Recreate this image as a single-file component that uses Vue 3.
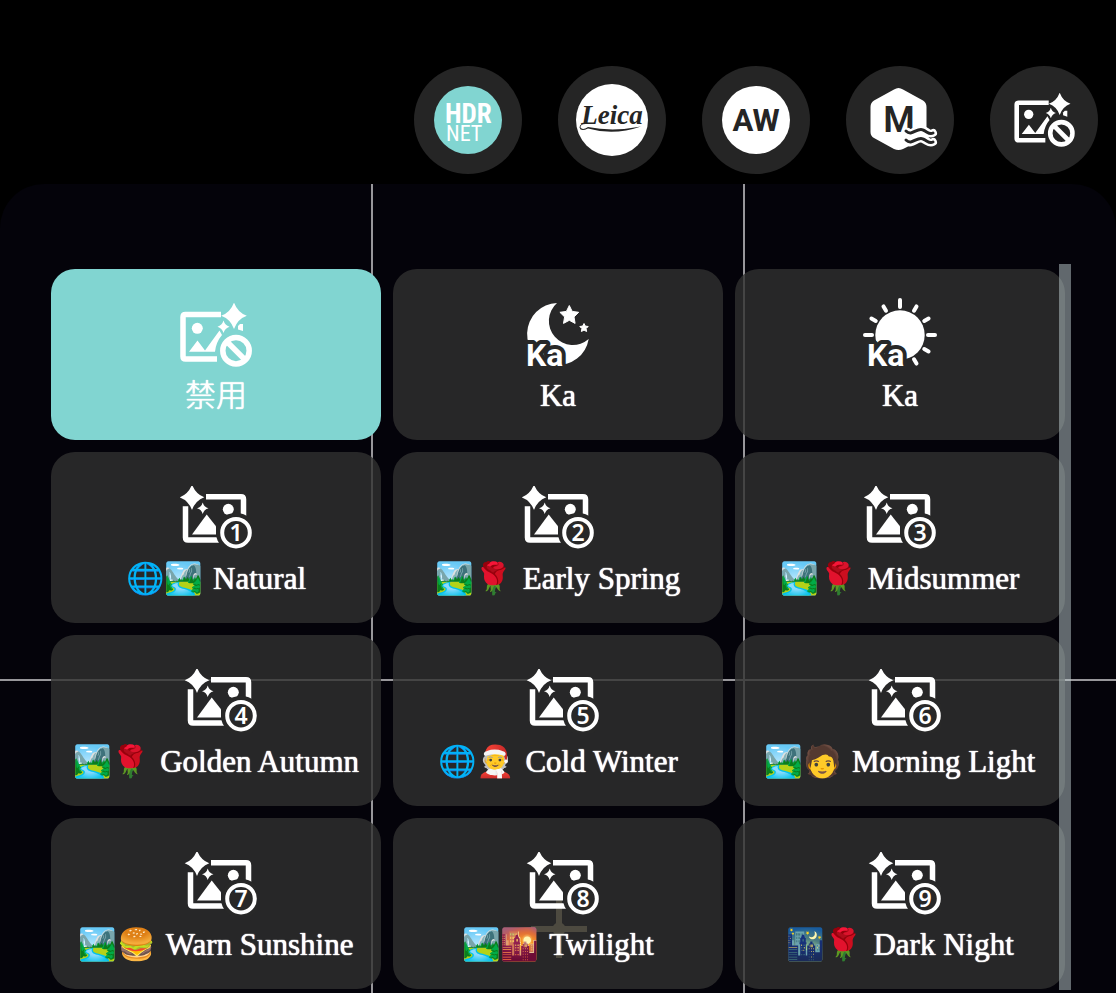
<script setup>
import { ref } from 'vue'

const selected = ref(0)

const presets = [
  { icon: 'off', label: '禁用' },
  { icon: 'moon', label: 'Ka' },
  { icon: 'sun', label: 'Ka' },
  { n: 1, emoji: '🌐🏞️', label: 'Natural' },
  { n: 2, emoji: '🏞️🌹', label: 'Early Spring' },
  { n: 3, emoji: '🏞️🌹', label: 'Midsummer' },
  { n: 4, emoji: '🏞️🌹', label: 'Golden Autumn' },
  { n: 5, emoji: '🌐🧑‍🎄', label: 'Cold Winter' },
  { n: 6, emoji: '🏞️🧑', label: 'Morning Light' },
  { n: 7, emoji: '🏞️🍔', label: 'Warn Sunshine' },
  { n: 8, emoji: '🏞️🌇', label: 'Twilight' },
  { n: 9, emoji: '🌃🌹', label: 'Dark Night' },
]

const numberedBox = (n) => (n > 3 ? '-10 0 82 64' : '0 0 72 64')
const rays = [0, 30, 60, 180, 210, 240, 270, 300, 330]
</script>

<template>
  <main class="camera">
    <svg class="defs" aria-hidden="true">
      <symbol id="off" viewBox="0 0 72 64">
        <path d="M41 11.500H5.500Q3 11.500 3 14V53.500Q3 56 5.500 56H37" fill="none" stroke="#fff" stroke-width="5.500" />
        <circle cx="17.300" cy="25.300" r="5.500" fill="#fff" />
        <path d="M9 48.700L17.500 37.500L25 47.500L39.500 27.500L42 32Q36 39 35 48.700Z" fill="#fff" />
        <path d="M54 -0.500Q57.500 9.500 66.800 12.700Q57.500 16 54 26Q50.500 16 41.200 12.700Q50.500 9.500 54 -0.500Z" fill="#fff" />
        <path d="M43.500 17.500Q45 22.500 49.500 23.700Q45 25 43.500 30Q42 25 37.500 23.700Q42 22.500 43.500 17.500Z" fill="#fff" />
        <path d="M58 23L60 21H63V28L58 26.500Z" fill="#fff" />
        <circle cx="56" cy="47.700" r="13.200" fill="none" stroke="#fff" stroke-width="5.500" />
        <path d="M46.500 38.200L65.500 57.200" stroke="#fff" stroke-width="5.500" />
      </symbol>
    </svg>

    <nav class="modes" aria-label="Processing">
      <button class="mode" type="button" aria-label="HDR NET">
        <svg viewBox="0 0 108 108">
          <circle cx="54" cy="54" r="34" fill="#81d5d1" />
          <text class="narrow" fill="#fff">
            <tspan x="31" y="57" font-size="27" font-weight="700">HDR</tspan>
            <tspan x="32" y="75" font-size="22">NET</tspan>
          </text>
        </svg>
      </button>
      <button class="mode" type="button" aria-label="Leica">
        <svg viewBox="0 0 108 108">
          <circle cx="54" cy="54" r="36" fill="#fff" />
          <text class="script" x="54" y="58" font-size="27" text-anchor="middle" fill="#252525">Leica</text>
          <path d="M29 58Q22 57.500 22.500 61.500Q24.500 64.500 30 61Q55 66 83 60.500Q56 70 30 62.500Q22.500 66 21.500 61.500Q22 56.500 29 57Z" fill="#252525" />
        </svg>
      </button>
      <button class="mode" type="button" aria-label="AW">
        <svg viewBox="0 0 108 108">
          <circle cx="54" cy="54" r="34" fill="#fff" />
          <text class="sans" x="54" y="65" font-size="31" font-weight="700" text-anchor="middle" fill="#252525">AW</text>
        </svg>
      </button>
      <button class="mode" type="button" aria-label="M">
        <svg viewBox="0 0 108 108">
          <path d="M48 23.500Q52.500 20.500 57 23.500L77 34.500Q80.500 36.500 80.500 41V66Q80.500 71 77 73L57 83Q52.500 85 48 83L28 72Q24.500 70 24.500 66V41Q24.500 36.500 28 34.500Z" fill="#fff" />
          <text class="sans" x="53" y="66" font-size="36" font-weight="600" text-anchor="middle" fill="#252525">M</text>
          <g fill="none" stroke-linecap="round" stroke-linejoin="round">
            <path d="M62 66C67 70 71 61 77 64C82 66 83 69 87 67M60 75C66 80 71 70 77 73C82 75 83 78 87 76" stroke="#fff" stroke-width="8" />
            <path d="M60 65C66 71 71 61 77 64C82 66 83 69 87 67M60 74C66 80 71 70 77 73C82 75 83 78 87 76" stroke="#252525" stroke-width="3" />
          </g>
        </svg>
      </button>
      <button class="mode" type="button" aria-label="禁用">
        <svg class="mode-off" viewBox="0 0 72 64"><use href="#off" /></svg>
      </button>
    </nav>

    <section class="panel">
      <i class="line vertical first"></i>
      <i class="line vertical second"></i>
      <i class="line horizontal"></i>
      <i class="focus"></i>

      <div class="grid">
        <button
          v-for="(p, i) in presets"
          :key="i"
          type="button"
          class="card"
          :class="{ active: selected === i }"
          :aria-pressed="selected === i"
          @click="selected = i"
        >
          <span class="art">
            <svg v-if="p.icon === 'off'" width="72" height="64" viewBox="0 0 72 64"><use href="#off" /></svg>

            <svg v-else-if="p.icon === 'moon'" width="62" height="64" viewBox="0 0 62 64" overflow="visible">
              <path d="M30 0A31 31 0 1 0 61.700 36A22 22 0 0 1 30 0Z" fill="#fff" />
              <path d="M42.300 2.500L45.200 8.400L51.700 9.300L47 13.900L48.100 20.400L42.300 17.300L36.500 20.400L37.600 13.900L32.900 9.300L39.400 8.400Z" fill="#fff" stroke="#fff" stroke-linejoin="round" />
              <path d="M57 20.500L58.300 23.100L61.200 23.500L59.100 25.600L59.600 28.500L57 27.100L54.400 28.500L54.900 25.600L52.800 23.500L55.700 23.100Z" fill="#fff" stroke="#fff" stroke-linejoin="round" />
              <text class="sans halo" x="-1" y="63" font-size="32">Ka</text>
            </svg>

            <svg v-else-if="p.icon === 'sun'" width="74" height="69" viewBox="0 0 74 69" overflow="visible">
              <circle cx="37" cy="37" r="24.700" fill="#fff" />
              <path
                v-for="a in rays"
                :key="a"
                :d="a % 90 ? 'M65 37H70' : 'M65 37H72'"
                :transform="`rotate(${a} 37 37)`"
                stroke="#fff"
                stroke-width="4"
                stroke-linecap="round"
              />
              <text class="sans halo" x="4" y="68" font-size="32">Ka</text>
            </svg>

            <svg v-else :width="p.n > 3 ? 82 : 72" height="64" :viewBox="numberedBox(p.n)">
              <path d="M26 10.700H61Q63.500 10.700 63.500 13.200V30M5.500 20.300V51.500Q5.500 54 8 54H40" fill="none" stroke="#fff" stroke-width="5.500" />
              <circle cx="48.300" cy="23.300" r="5.500" fill="#fff" />
              <path d="M12 48.500L26.700 28.500L36 40.300V48.500Z" fill="#fff" />
              <path d="M12 -1.500Q15.500 8 24.300 11.300Q15.500 14.500 12 24Q8.500 14.500 -0.300 11.300Q8.500 8 12 -1.500Z" fill="#fff" />
              <path d="M22.700 16.500Q24 21 28.500 22.300Q24 23.500 22.700 28Q21.500 23.500 17 22.300Q21.500 21 22.700 16.500Z" fill="#fff" />
              <circle cx="56" cy="46.700" r="20" fill="#282828" />
              <circle cx="56" cy="46.700" r="13.800" fill="none" stroke="#fff" stroke-width="4" />
              <text class="digit" x="56" y="55" font-size="23" text-anchor="middle" fill="#fff">{{ p.n }}</text>
            </svg>
          </span>
          <span class="label">
            <span v-if="p.emoji">{{ p.emoji }}</span>
            <span>{{ p.label }}</span>
          </span>
        </button>
      </div>

      <i class="scrollbar"></i>
    </section>
  </main>
</template>

<style>
body {
  background: #000;
}
</style>

<style scoped>
.camera {
  display: flex;
  flex-direction: column;
  min-height: 100vh;
  background: #000;
}

.defs {
  position: absolute;
  width: 0;
  height: 0;
}

button {
  padding: 0;
  border: 0;
  color: #fff;
  cursor: pointer;
}

.modes {
  display: flex;
  justify-content: flex-end;
  gap: 36px;
  padding: 66px 18px 10px;
}

.mode {
  display: flex;
  align-items: center;
  justify-content: center;
  width: 108px;
  height: 108px;
  border-radius: 50%;
  background: #252525;
}

.mode svg {
  width: 108px;
  height: 108px;
}

.mode .mode-off {
  width: 61px;
  height: 54px;
}

.narrow {
  font-family: "Liberation Sans Narrow", "Roboto Condensed", Roboto, sans-serif;
}

.sans {
  font-family: Roboto, sans-serif;
}

.script {
  font-family: "Liberation Serif", serif;
  font-style: italic;
  font-weight: 700;
}

.digit {
  font-family: "Noto Sans", sans-serif;
  font-weight: 600;
}

.halo {
  font-weight: 700;
  fill: #fff;
  stroke: #282828;
  stroke-width: 8px;
  stroke-linejoin: round;
  paint-order: stroke;
}

.panel {
  position: relative;
  flex: 1;
  overflow: hidden;
  padding: 85px 51px 4px;
  border-radius: 44px 44px 0 0;
  background: #04030a;
}

.line {
  position: absolute;
  background: #98979b;
}

.vertical {
  top: 0;
  bottom: 0;
  width: 2px;
}

.first {
  left: calc(100% / 3 - 1px);
}

.second {
  left: calc(200% / 3 - 1px);
}

.horizontal {
  top: 495px;
  left: 0;
  right: 0;
  height: 2px;
}

.focus {
  position: absolute;
  top: 716px;
  left: calc(50% - 27px);
  width: 56px;
  height: 58px;
  background:
    radial-gradient(circle, #beb080 6px, transparent 7px),
    linear-gradient(#beb080, #beb080) center / 6px 100% no-repeat,
    linear-gradient(#beb080, #beb080) center / 100% 6px no-repeat;
}

.grid {
  position: relative;
  display: grid;
  grid-template-columns: repeat(3, 1fr);
  gap: 12px;
}

.card {
  display: flex;
  flex-direction: column;
  align-items: center;
  min-height: 171px;
  border-radius: 24px;
  background: rgba(49, 49, 48, 0.8);
}

.card.active {
  background: #81d5d1;
}

.art {
  display: flex;
  align-items: flex-end;
  height: 98px;
}

.art svg {
  display: block;
}

.label {
  display: flex;
  gap: 10px;
  margin-top: 9px;
  font-family: "Liberation Serif", "Noto Color Emoji", "Noto Sans CJK SC", serif;
  font-size: 31px;
  font-weight: 300;
  line-height: 40px;
  white-space: nowrap;
}

.label span:last-child {
  text-shadow: 0 0 1px #fff, 0 0 1px #fff;
}

.scrollbar {
  position: absolute;
  top: 80px;
  right: 45px;
  bottom: 3px;
  width: 12px;
  background: rgba(190, 205, 208, 0.5);
}
</style>
